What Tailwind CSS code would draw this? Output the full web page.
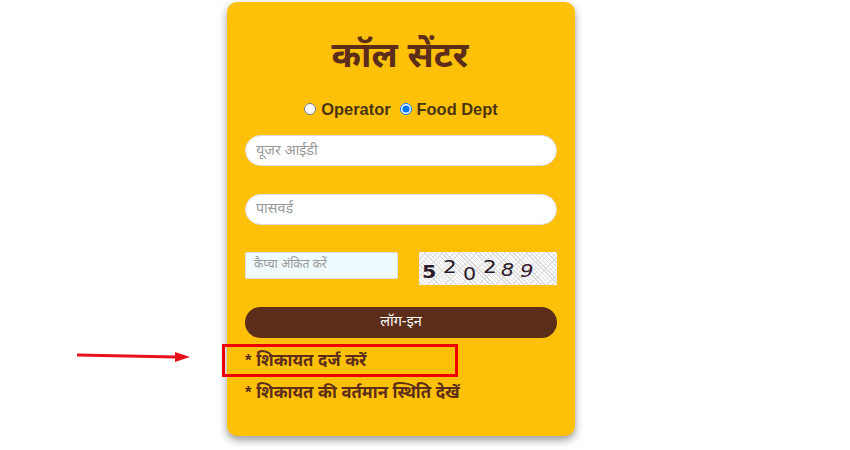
<!DOCTYPE html>
<html lang="en">
<head>
    <meta charset="UTF-8">
    <title>कॉल सेंटर</title>
    <script src="https://cdn.jsdelivr.net/npm/@tailwindcss/browser@4"></script>
</head>
<body class="relative h-[450px] w-[850px] overflow-hidden bg-white font-['Liberation_Sans','Noto_Sans',sans-serif]">
    <!-- Login card -->
    <div class="ml-[227px] mt-[2px] h-[434px] w-[348px] rounded-[10px] bg-[#ffc107] px-[18px] pt-[30px] shadow-[0_4px_8px_rgba(0,0,0,0.4)]">
        <h1 class="h-[46px] pr-[2px] text-center text-[35.5px] leading-[46px] font-bold text-[#5c2e1a]">कॉल सेंटर</h1>

        <!-- Login type -->
        <div class="mt-[20px] flex h-[22px] items-center justify-center text-[16.4px] font-bold text-[#4a3510]">
            <input type="radio" name="type" class="mr-[5px] h-[12px] w-[12px]">
            <span class="mr-[9px]">Operator</span>
            <input type="radio" name="type" checked class="mr-[5px] h-[12px] w-[12px]">
            <span>Food Dept</span>
        </div>

        <input placeholder="यूजर आईडी" class="mt-[15px] block h-[31px] w-[312px] rounded-full border border-[#ddd] bg-white px-[10px] pb-[1px] text-[14.3px] outline-none placeholder:text-[#999]">
        <input placeholder="पासवर्ड" class="mt-[28px] block h-[31px] w-[312px] rounded-full border border-[#ddd] bg-white px-[10px] pb-[3px] text-[14.3px] outline-none placeholder:text-[#999]">

        <!-- Captcha -->
        <div class="mt-[27px] flex items-start justify-between">
            <input placeholder="कैप्चा अंकित करें" class="h-[27px] w-[153px] rounded-[2px] border border-[#ddd] bg-[#f0fbff] px-[8px] pb-[3px] text-[12px] outline-none placeholder:text-[#999]">
            <div class="relative h-[33px] w-[138px] bg-white bg-[repeating-linear-gradient(45deg,transparent_0,transparent_2px,#dcdcdc_2px,#dcdcdc_3px),repeating-linear-gradient(-45deg,transparent_0,transparent_3px,#e4e4e4_3px,#e4e4e4_4px)] font-['DejaVu_Sans',sans-serif] text-[#2a1a2a]">
                <span class="absolute top-[9px] left-[3px] origin-left scale-x-[1.15] text-[18px] leading-[22px] font-bold">5</span>
                <span class="absolute top-[4px] left-[24px] origin-left scale-x-[1.2] text-[18px] leading-[22px]">2</span>
                <span class="absolute top-[11px] left-[44px] origin-left scale-x-[1.15] text-[18px] leading-[22px]">0</span>
                <span class="absolute top-[4px] left-[64px] origin-left scale-x-[1.2] text-[18px] leading-[22px]">2</span>
                <span class="absolute top-[7px] left-[82px] origin-left scale-x-[1.2] text-[17px] leading-[22px] italic">8</span>
                <span class="absolute top-[8px] left-[101px] origin-left scale-x-[1.25] text-[17px] leading-[22px] text-[#3a1830] italic">9</span>
            </div>
        </div>

        <button class="mt-[22px] block h-[31px] w-[312px] rounded-full bg-[#5c2e1a] pb-[2px] text-center text-[14.5px] text-white">लॉग-इन</button>

        <a class="mt-[11px] block h-[32px] text-[16.7px] leading-[24px] font-bold text-[#5c2e1a]">* शिकायत दर्ज करें</a>
        <a class="block h-[31px] text-[16.7px] leading-[24px] font-bold text-[#5c2e1a]">* शिकायत की वर्तमान स्थिति देखें</a>
    </div>

    <!-- Annotation drawn over the page -->
    <div class="absolute top-[344px] left-[222px] h-[33px] w-[236px] border-[3px] border-[#f00000]"></div>
    <svg class="absolute top-[345px] left-[70px]" width="125" height="22" viewBox="0 0 125 22">
        <path d="M7 10 L106 12" stroke="#e8121c" stroke-width="3" fill="none"/>
        <path d="M105 7 L120 12 L105 17 Z" fill="#e8121c"/>
    </svg>
</body>
</html>
